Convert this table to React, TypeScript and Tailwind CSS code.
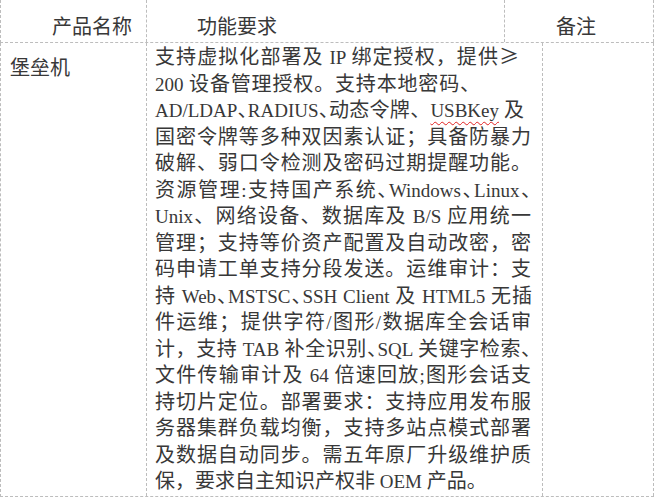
import React from "react";

type Part = string | { wavy: string };

const lines: { parts: Part[]; w: string; last?: boolean }[] = [
  { parts: ["支持虚拟化部署及 IP 绑定授权，提供≥"], w: "w-[364px]" },
  { parts: ["200 设备管理授权。支持本地密码、"], w: "w-[325px]" },
  { parts: ["AD/LDAP､RADIUS､动态令牌、", { wavy: "USBKey" }, " 及"], w: "w-[369px]" },
  { parts: ["国密令牌等多种双因素认证；具备防暴力"], w: "w-[376px]" },
  { parts: ["破解、弱口令检测及密码过期提醒功能。"], w: "w-[376px]" },
  { parts: ["资源管理:支持国产系统､Windows､Linux､"], w: "w-[376px]" },
  { parts: ["Unix、网络设备、数据库及 B/S 应用统一"], w: "w-[376px]" },
  { parts: ["管理；支持等价资产配置及自动改密，密"], w: "w-[376px]" },
  { parts: ["码申请工单支持分段发送。运维审计：支"], w: "w-[376px]" },
  { parts: ["持 Web､MSTSC､SSH Client 及 HTML5 无插"], w: "w-[377px]" },
  { parts: ["件运维；提供字符/图形/数据库全会话审"], w: "w-[376px]" },
  { parts: ["计，支持 TAB 补全识别､SQL 关键字检索､"], w: "w-[376px]" },
  { parts: ["文件传输审计及 64 倍速回放;图形会话支"], w: "w-[376px]" },
  { parts: ["持切片定位。部署要求：支持应用发布服"], w: "w-[376px]" },
  { parts: ["务器集群负载均衡，支持多站点模式部署"], w: "w-[376px]" },
  { parts: ["及数据自动同步。需五年原厂升级维护质"], w: "w-[376px]" },
  { parts: ["保，要求自主知识产权非 OEM 产品。"], w: "w-auto", last: true },
];

const LATIN = /^[A-Za-z0-9/:;. ]+$/;

function Run({ text }: { text: string }) {
  const bits = text.split(/([A-Za-z0-9/:;. ]+|､)/).filter(Boolean);
  return (
    <>
      {bits.map((b, i) => {
        if (b === "､") return <span key={i} className="tracking-[-10px]">、</span>;
        if (LATIN.test(b))
          return (
            <span key={i} className="[font-family:'Liberation_Serif',serif] text-[19px]">
              {b}
            </span>
          );
        return <span key={i}>{b}</span>;
      })}
    </>
  );
}

export default function App() {
  return (
    <div className="w-[654px] h-[504px] bg-white text-[#383838] text-[20px] leading-[26.5px] [font-family:'Noto_Sans_CJK_SC',sans-serif] overflow-hidden">
      {/* header row */}
      <div className="flex h-[43px] border-b border-l border-dashed border-[#bdbdbd]">
        <div className="w-[146px] shrink-0 border-r border-dashed border-[#bdbdbd] pl-[51px] pt-[13px]">产品名称</div>
        <div className="w-[358px] shrink-0 border-r border-dashed border-[#bdbdbd] pl-[50px] pt-[13px]">功能要求</div>
        <div className="flex-1 border-r border-dashed border-[#bdbdbd] pl-[51px] pt-[13px]">备注</div>
      </div>

      {/* body row */}
      <div className="flex h-[454px] border-b border-l border-dashed border-[#bdbdbd]">
        <div className="w-[146px] shrink-0 border-r border-dashed border-[#bdbdbd] pl-[9px] pt-[11px]">堡垒机</div>
        <div className="w-[396px] shrink-0 border-r border-dashed border-[#bdbdbd] pl-[8px]">
          {lines.map((ln, i) => (
            <div
              key={i}
              className={`h-[26.5px] ${ln.w} ${ln.last ? "text-left" : "text-justify [text-align-last:justify]"}`}
            >
              {ln.parts.map((p, j) =>
                typeof p === "string" ? (
                  <Run key={j} text={p} />
                ) : (
                  <span
                    key={j}
                    className="[font-family:'Liberation_Serif',serif] text-[19px] underline decoration-wavy decoration-[#e02020] decoration-1 underline-offset-[4px]"
                  >
                    {p.wavy}
                  </span>
                )
              )}
            </div>
          ))}
        </div>
        <div className="flex-1 border-r border-dashed border-[#bdbdbd]"></div>
      </div>
    </div>
  );
}
